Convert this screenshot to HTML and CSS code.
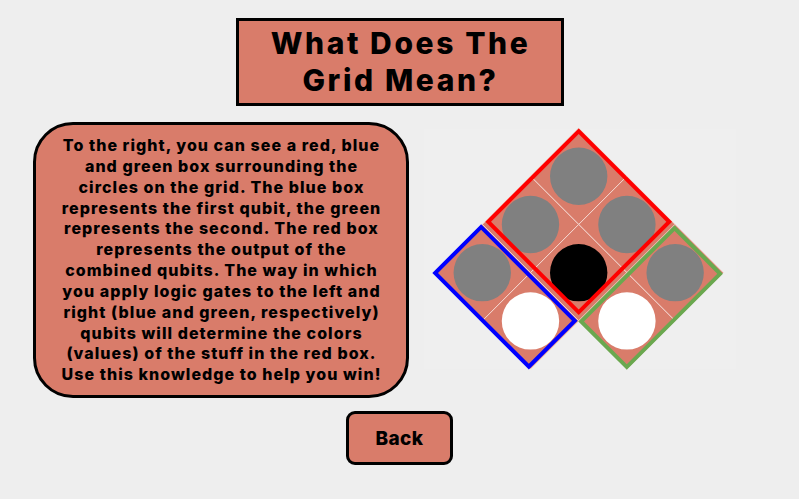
FILE: index.html
```html
<!DOCTYPE html>
<html lang="en">
<head>
<meta charset="utf-8">
<title>What Does The Grid Mean?</title>
<link rel="stylesheet" href="styles.css">
</head>
<body>
<main class="page">
  <h1 class="title">What Does The<br>Grid Mean?</h1>
  <section class="row">
    <div class="info">
      <p class="info-text">To the right, you can see a red, blue<br>and green box surrounding the<br>circles on the grid. The blue box<br>represents the first qubit, the green<br>represents the second. The red box<br>represents the output of the<br>combined qubits. The way in which<br>you apply logic gates to the left and<br>right (blue and green, respectively)<br>qubits will determine the colors<br>(values) of the stuff in the red box.<br>Use this knowledge to help you win!</p>
    </div>
    <svg class="diagram" width="312" height="241" viewBox="0 0 312 241" xmlns="http://www.w3.org/2000/svg">
      <rect x="0" y="1" width="312" height="240" fill="#efefef"/>
      <g transform="translate(154.7,0) rotate(45)">
        <g fill="#d97c6a" stroke="#f6dcd6" stroke-width="0.8">
          <rect x="0" y="0" width="68.2" height="68.2"/>
          <rect x="68.2" y="0" width="68.2" height="68.2"/>
          <rect x="136.4" y="0" width="68.2" height="68.2"/>
          <rect x="0" y="68.2" width="68.2" height="68.2"/>
          <rect x="68.2" y="68.2" width="68.2" height="68.2"/>
          <rect x="136.4" y="68.2" width="68.2" height="68.2"/>
          <rect x="0" y="136.4" width="68.2" height="68.2"/>
          <rect x="68.2" y="136.4" width="68.2" height="68.2"/>
        </g>
        <circle cx="34.1" cy="34.1" r="28.7" fill="#808080"/>
        <circle cx="102.3" cy="34.1" r="28.7" fill="#808080"/>
        <circle cx="170.5" cy="34.1" r="28.7" fill="#808080"/>
        <circle cx="34.1" cy="102.3" r="28.7" fill="#808080"/>
        <circle cx="102.3" cy="102.3" r="28.7" fill="#000000"/>
        <circle cx="170.5" cy="102.3" r="28.7" fill="#ffffff"/>
        <circle cx="34.1" cy="170.5" r="28.7" fill="#808080"/>
        <circle cx="102.3" cy="170.5" r="28.7" fill="#ffffff"/>
        <rect x="1" y="139" width="132.5" height="65" fill="none" stroke="#0000ff" stroke-width="4"/>
        <rect x="2.3" y="2.3" width="128" height="128" fill="none" stroke="#ff0000" stroke-width="4"/>
        <rect x="138.5" y="3" width="64.5" height="132" fill="none" stroke="#6aa84f" stroke-width="4"/>
      </g>
    </svg>
  </section>
  <button class="back" type="button">Back</button>
</main>
</body>
</html>
```

FILE: styles.css
```css
html, body {
  margin: 0;
  padding: 0;
}

body {
  background: #eeeeee;
  font-family: Inter, "Noto Sans", "DejaVu Sans", sans-serif;
  font-weight: 700;
  color: #000;
}

.page {
  width: 799px;
  height: 499px;
  display: flex;
  flex-direction: column;
  align-items: center;
  padding-top: 18px;
  box-sizing: border-box;
}

.title {
  margin: 0;
  width: 328px;
  height: 88px;
  box-sizing: border-box;
  padding-top: 4px;
  padding-left: 2px;
  background: #d97c6a;
  border: 3px solid #000;
  font-size: 30px;
  line-height: 37px;
  font-weight: 800;
  text-align: center;
  letter-spacing: 2.6px;
}

.row {
  align-self: flex-start;
  display: flex;
  align-items: flex-start;
  gap: 15px;
  margin-top: 16px;
  padding-left: 33px;
}

.info {
  width: 376px;
  height: 276px;
  box-sizing: border-box;
  background: #d97c6a;
  border: 3px solid #000;
  border-radius: 40px;
  padding-top: 10px;
  padding-left: 1px;
}

.info-text {
  margin: 0;
  font-size: 16px;
  line-height: 20.85px;
  text-align: center;
  font-weight: 800;
  letter-spacing: 1.05px;
}

.diagram {
  display: block;
  margin-top: 6px;
  overflow: visible;
}

.back {
  margin-top: 13px;
  width: 107px;
  height: 54px;
  box-sizing: border-box;
  background: #d97c6a;
  border: 3px solid #000;
  border-radius: 9px;
  font-family: inherit;
  font-weight: 800;
  font-size: 19px;
  color: #000;
  padding: 0;
  letter-spacing: 0.4px;
}
```
